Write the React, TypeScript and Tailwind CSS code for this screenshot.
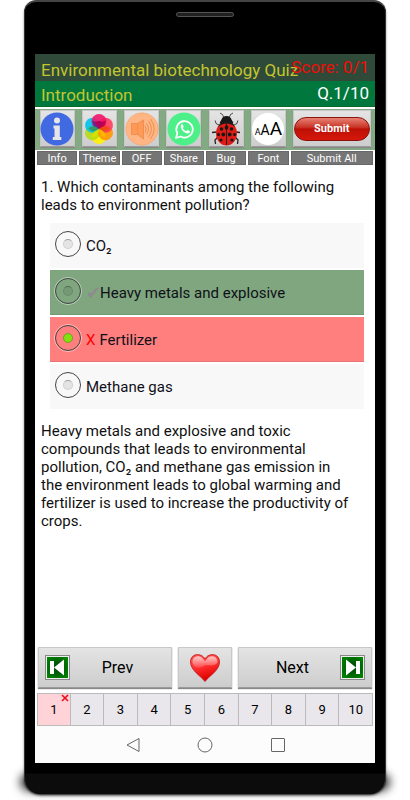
import { useState } from "react";
import type { ReactNode } from "react";

interface Tool {
  label: string;
  icon: ReactNode;
}

interface Option {
  id: string;
  text: string;
  state?: "correct" | "wrong";
}

const PETALS = [
  { angle: 180, color: "#fff200" },
  { angle: 240, color: "#b8dc10" },
  { angle: 120, color: "#ff9800" },
  { angle: 60, color: "#ff3d5e" },
  { angle: 300, color: "#00c3ea" },
  { angle: 0, color: "#f0146a" },
];

function InfoIcon() {
  return (
    <svg viewBox="0 0 34 34" className="size-[34px]">
      <circle cx="17" cy="17" r="16.5" fill="#4169e1" />
      <circle cx="17" cy="8.5" r="3" fill="#e6e6e6" />
      <path d="M13.500 13.500h6.300V25h1.500v3h-8.500v-3h1.700v-8.500h-1z" fill="#e6e6e6" />
    </svg>
  );
}

function ThemeIcon() {
  return (
    <svg viewBox="0 0 34 34" className="size-[34px]">
      {PETALS.map((petal) => (
        <circle
          key={petal.angle}
          cx="17"
          cy="9.500"
          r="7.500"
          fill={petal.color}
          fillOpacity="0.9"
          transform={`rotate(${petal.angle} 17 17)`}
        />
      ))}
      <path d="M17 17q-7.500-2.500-6.500-8.500Q16.500 9.500 17 17z" fill="#5a2f9a" />
      <path d="M17 17q7.500-2.500 6.500-8.500Q17.500 9.500 17 17z" fill="#c4004f" />
      <path d="M17 17l-4.500-6.500q4.500-3 9 0z" fill="#b0005a" />
      <path d="M17 17q6-5 10.600-.5Q23.500 21.500 17 17z" fill="#f04a14" />
      <path d="M17 17q7.500 2.500 6.500 8.500Q17.500 24.500 17 17z" fill="#ffb400" />
      <path d="M17 17q-7.500 2.500-6.500 8.500Q16.500 24.500 17 17z" fill="#d8e000" />
      <path d="M17 17q-6-5-10.600-.5Q10.500 21.500 17 17z" fill="#2f9a6a" />
    </svg>
  );
}

function SoundIcon() {
  return (
    <svg viewBox="0 0 34 34" className="size-[34px]" fill="none" stroke="#e48b4c">
      <circle cx="17" cy="17" r="16.2" fill="#ffb684" stroke="#f3a36c" strokeWidth="0.6" />
      <path d="M6.500 11.500h6L18.500 8v19l-6-4.500h-6z" fill="#ff9955" strokeWidth="0.8" />
      <path d="M12.500 11.500v11" strokeWidth="0.7" />
      <path
        d="M20 13.500q2.400 3.500 0 7M21.500 11.500q4 5.500 0 11M23.500 9q5.800 8 0 16M25.500 7q7.400 10 0 20"
        strokeWidth="0.9"
      />
    </svg>
  );
}

function ShareIcon() {
  return (
    <svg viewBox="0 0 34 34" className="size-[34px]">
      <circle cx="17" cy="17" r="16.500" fill="#4df088" />
      <path
        d="M9 26l1.400-4.700a8.200 8.200 0 1 1 3.200 3.200z"
        fill="none"
        stroke="#fff"
        strokeWidth="1.800"
        strokeLinejoin="round"
      />
      <path
        d="M14.300 12.500c.7-.6 1.300-.4 1.600.3l.7 1.600c.2.500-.6 1.100-.8 1.500.8 1.700 2 2.700 3.600 3.300.5-.4.900-1.300 1.400-1.100l1.700.8c.8.400.4 1.700-.4 2.200-3.400 2.100-10.300-5-7.800-8.600z"
        fill="#fff"
      />
    </svg>
  );
}

function BugIcon() {
  return (
    <svg viewBox="0 0 34 34" className="size-[34px]">
      <g fill="none" stroke="#222" strokeWidth="0.8" strokeLinejoin="round">
        <path d="M15 6l-1.500-3.500L11 1M20 6l1.500-3.500L24 1" />
        <path d="M10 13l-3-1.500-.8-3M25 13l3-1.500.8-3" />
        <path d="M8 20l-5 .500M27 20l4 .500" strokeWidth="1.300" />
        <path d="M9 25l-3 3 .500 4M26 25l3 3-.500 4" strokeWidth="1.300" />
      </g>
      <path d="M12.500 7.500q1-3.500 5-3.500t5 3.500l2 3.500h-14z" fill="#171717" />
      <ellipse cx="17.500" cy="21.500" rx="10.500" ry="12" fill="#e01c16" />
      <path d="M9 15q2.500-6.500 8.500-6.500T26 15q-3.500-3.500-8.500-3.500T9 15z" fill="#1a1a1a" />
      <path d="M17.500 11v22" stroke="#1a1a1a" strokeWidth="0.9" />
      <g fill="#171717">
        <ellipse cx="17.500" cy="15.500" rx="1.800" ry="2.300" />
        <circle cx="12.500" cy="17" r="1.800" />
        <circle cx="22.500" cy="17" r="1.800" />
        <circle cx="9.500" cy="22.500" r="1.500" />
        <circle cx="14.300" cy="22.500" r="1.900" />
        <circle cx="20.700" cy="22.500" r="1.900" />
        <circle cx="25.500" cy="22.500" r="1.500" />
        <circle cx="12" cy="28" r="1.600" />
        <circle cx="23" cy="28" r="1.600" />
      </g>
    </svg>
  );
}

function FontIcon() {
  return (
    <span className="flex size-8 items-baseline justify-center rounded-full bg-white pt-1 font-['Roboto',sans-serif] leading-6 text-black">
      <span className="text-[9px]">A</span>
      <span className="text-[14px]">A</span>
      <span className="text-[19px]">A</span>
    </span>
  );
}

function SkipIcon({ flip = false }: { flip?: boolean }) {
  return (
    <svg viewBox="0 0 25 25" className={flip ? "size-[25px] -scale-x-100" : "size-[25px]"}>
      <defs>
        <radialGradient id={flip ? "skipNext" : "skipPrev"} cx="50%" cy="50%" r="70%">
          <stop offset="0" stopColor="#00430a" />
          <stop offset="1" stopColor="#008a00" />
        </radialGradient>
      </defs>
      <rect x="0.500" y="0.500" width="24" height="24" fill="#eee" stroke="#888" />
      <rect x="2" y="2" width="21" height="21" fill={`url(#${flip ? "skipNext" : "skipPrev"})`} />
      <path d="M5 6h4v13H5zM19 4.500v16L9 12.500z" fill="#fff" />
    </svg>
  );
}

function HeartIcon() {
  return (
    <svg viewBox="0 0 32 30" className="h-[30px] w-8">
      <defs>
        <linearGradient id="heartFill" x1="0" y1="0" x2="0.300" y2="1">
          <stop offset="0" stopColor="#ff5a5a" />
          <stop offset="0.500" stopColor="#ff3030" />
          <stop offset="1" stopColor="#e00000" />
        </linearGradient>
        <linearGradient id="heartShine" x1="0" y1="0" x2="0" y2="1">
          <stop offset="0" stopColor="#fff" stopOpacity="0.700" />
          <stop offset="1" stopColor="#fff" stopOpacity="0.100" />
        </linearGradient>
      </defs>
      <path
        d="M16 28.500C12 23 1.500 17.500 1.500 9c0-9 11-9.500 14.500-3C19.500-.5 30.500 0 30.500 9c0 8.500-10.500 14-14.500 19.500z"
        fill="url(#heartFill)"
        stroke="#c01515"
        strokeWidth="0.800"
      />
      <path
        d="M3.500 9.500C3 2.500 12 1 15 7.200c.500 1 1.500 1 2 0C20 1 29 2.500 28.500 9.500 25 15 18 10.500 14 13.500 9 16.500 5 14.500 3.500 9.500z"
        fill="url(#heartShine)"
      />
    </svg>
  );
}

const TOOLS: Tool[] = [
  { label: "Info", icon: <InfoIcon /> },
  { label: "Theme", icon: <ThemeIcon /> },
  { label: "OFF", icon: <SoundIcon /> },
  { label: "Share", icon: <ShareIcon /> },
  { label: "Bug", icon: <BugIcon /> },
  { label: "Font", icon: <FontIcon /> },
];

const OPTIONS: Option[] = [
  { id: "a", text: "CO₂" },
  { id: "b", text: "Heavy metals and explosive", state: "correct" },
  { id: "c", text: "Fertilizer", state: "wrong" },
  { id: "d", text: "Methane gas" },
];

const PAGES = [1, 2, 3, 4, 5, 6, 7, 8, 9, 10];

const raised =
  "bg-linear-to-b from-[#e4e4e4] to-[#cdcdcd] border border-[#c8c8c8] border-b-[#9a9a9a] shadow-[0_1px_1px_#888]";

function Header() {
  return (
    <header>
      <div className="relative flex h-[27px] items-center bg-[#304a39] px-[6px] pt-1">
        <h1 className="text-[17px] leading-5 whitespace-nowrap text-[#c3c52f]">
          Environmental biotechnology Quiz
        </h1>
        <span className="absolute top-[3px] right-[6px] text-[17px] leading-5 text-[#ee0c05]">
          Score: 0/1
        </span>
      </div>
      <div className="flex h-[26px] justify-between border-b border-[#086b2a] bg-[#00783d] px-[6px]">
        <h2 className="pt-1 text-[17px] leading-5 text-[#c3c52f]">Introduction</h2>
        <span className="pt-[2px] text-[17px] leading-5 text-white">Q.1/10</span>
      </div>
    </header>
  );
}

function ToolLabel({ children }: { children: ReactNode }) {
  return (
    <span className="mt-1 block h-[14px] w-full bg-[#757575] text-center text-[11px] leading-[15px] text-white outline -outline-offset-1 outline-[#686868]">
      {children}
    </span>
  );
}

function Toolbar() {
  return (
    <div className="mt-[2px] grid grid-cols-8 gap-[2px] bg-[linear-gradient(#83aa83_41px,#fff_41px)] px-[2px] pt-px">
      {TOOLS.map((tool) => (
        <button key={tool.label} type="button" className="flex flex-col items-center">
          <span className={`flex h-[37px] w-[35px] items-center justify-center ${raised}`}>
            <span className="shrink-0">{tool.icon}</span>
          </span>
          <ToolLabel>{tool.label}</ToolLabel>
        </button>
      ))}
      <button type="button" className="col-span-2 flex flex-col items-center">
        <span className={`flex h-[37px] w-[78px] items-center justify-center ${raised}`}>
          <span className="flex h-6 w-[76px] shrink-0 items-center justify-center rounded-full border border-[#8b120c] bg-[linear-gradient(#e78274_0%,#c83427_42%,#bd1006_50%,#d6180a_100%)] pt-[2px] font-['Roboto',sans-serif] text-[11px] font-bold text-white">
            Submit
          </span>
        </span>
        <ToolLabel>Submit All</ToolLabel>
      </button>
    </div>
  );
}

function OptionRow({
  option,
  checked,
  onSelect,
}: {
  option: Option;
  checked: boolean;
  onSelect: () => void;
}) {
  const tone =
    option.state === "correct"
      ? "bg-[#7fa67f] border-[#729a72]"
      : option.state === "wrong"
        ? "bg-[#ff7f7f] border-[#e87474]"
        : "bg-[#f8f8f8] border-[#f8f8f8]";

  return (
    <label className={`flex h-[45px] items-start border-b pt-[7px] pl-1 text-[15px] ${tone}`}>
      <span className="grid size-7 shrink-0 place-items-center rounded-full border border-white/50">
        <input
          type="radio"
          name="answer"
          checked={checked}
          onChange={onSelect}
          className="col-start-1 row-start-1 size-[26px] appearance-none rounded-full border border-[#444]"
        />
        <span
          className={
            checked
              ? "col-start-1 row-start-1 size-[10px] rounded-full border border-[#6aa51c] bg-[#84e010]"
              : "col-start-1 row-start-1 size-[10px] rounded-full border border-black/10 border-t-black/30 bg-black/8"
          }
        />
      </span>
      <span className="flex pt-[6px] pl-1 leading-5 text-[#101018]">
        {option.state === "correct" && (
          <span className="w-[14px] font-['DejaVu_Sans',sans-serif] text-[18px] text-[#8c8c8c]">
            ✔
          </span>
        )}
        {option.state === "wrong" && <span className="pr-1 text-[#f00]">X</span>}
        <span>{option.text}</span>
      </span>
    </label>
  );
}

function SystemNav() {
  return (
    <nav className="grid h-[37px] shrink-0 grid-cols-[97px_1fr_97px] place-items-center bg-[#fcfcfc] px-[49px]">
      <button type="button" aria-label="Back">
        <svg viewBox="0 0 16 16" className="size-4" fill="none" stroke="#666">
          <path d="M14 1.500v13L2 8z" strokeLinejoin="round" />
        </svg>
      </button>
      <button type="button" aria-label="Home">
        <svg viewBox="0 0 16 16" className="size-4" fill="none" stroke="#666">
          <circle cx="8" cy="8" r="7" />
        </svg>
      </button>
      <button type="button" aria-label="Recents">
        <svg viewBox="0 0 16 16" className="size-4" fill="none" stroke="#666">
          <rect x="1.500" y="1.500" width="13" height="13" rx="0.500" />
        </svg>
      </button>
    </nav>
  );
}

export default function App() {
  const [selected, setSelected] = useState("c");

  return (
    <div className="relative isolate flex min-h-screen flex-col bg-white px-6 pb-[6px] font-['Roboto',sans-serif]">
      {/* soft shadow under the foot of the phone */}
      <div className="absolute inset-x-[20px] bottom-[9px] -z-10 h-[18px] rounded-full bg-black/80 blur-[5px]" />
      <div className="flex flex-1 flex-col rounded-t-[12px] rounded-b-[16px] border-x border-t-2 border-x-[#333] border-t-[#444] bg-black bg-linear-to-t from-[#0c0c0c] from-[20px] to-black to-[22px] px-[10px] pb-[31px] shadow-[0_2px_3px_-1px_#000]">
        <div className="flex h-[52px] shrink-0 justify-center pt-[10px]">
          <span className="h-[5px] w-[58px] rounded-full border border-[#555] bg-[#202020]" />
        </div>

        <div className="flex flex-1 flex-col bg-white">
          <Header />
          <Toolbar />

          <main className="flex-1 px-[6px] pt-[13px] pb-4 text-[15px] leading-[18px] text-[#101010]">
            <p>1. Which contaminants among the following leads to environment pollution?</p>
            <div className="mt-[9px] mr-[5px] ml-[9px] space-y-[2px]">
              {OPTIONS.map((option) => (
                <OptionRow
                  key={option.id}
                  option={option}
                  checked={selected === option.id}
                  onSelect={() => setSelected(option.id)}
                />
              ))}
            </div>
            <p className="mt-[13px] pr-4">
              Heavy metals and explosive and toxic compounds that leads to environmental pollution,
              CO₂ and methane gas emission in the environment leads to global warming and
              fertilizer is used to increase the productivity of crops.
            </p>
          </main>

          <div className="flex gap-[6px] px-[3px] text-base text-black">
            <button type="button" className={`flex h-[41px] flex-1 items-center px-[6px] ${raised}`}>
              <SkipIcon />
              <span className="flex-1 text-center">Prev</span>
            </button>
            <button
              type="button"
              aria-label="Favourite"
              className={`flex h-[41px] w-[54px] items-center justify-center ${raised}`}
            >
              <HeartIcon />
            </button>
            <button type="button" className={`flex h-[41px] flex-1 items-center px-[6px] ${raised}`}>
              <span className="flex-1 text-center">Next</span>
              <SkipIcon flip />
            </button>
          </div>

          <div className="mx-[2px] mt-[5px] grid grid-cols-10">
            {PAGES.map((page) => (
              <button
                key={page}
                type="button"
                className={`relative h-[33px] border-y border-r border-[#bbb] text-[13px] text-black first:border-l ${
                  page === 1 ? "bg-[#ffd3d8]" : "bg-[#e9e7ec]"
                }`}
              >
                {page}
                {page === 1 && (
                  <svg
                    viewBox="0 0 8 8"
                    className="absolute top-0 right-px size-2"
                    stroke="#e80f1b"
                    strokeWidth="1.600"
                  >
                    <path d="M1 1l6 6M7 1L1 7" />
                  </svg>
                )}
              </button>
            ))}
          </div>

          <SystemNav />
        </div>
      </div>
    </div>
  );
}
